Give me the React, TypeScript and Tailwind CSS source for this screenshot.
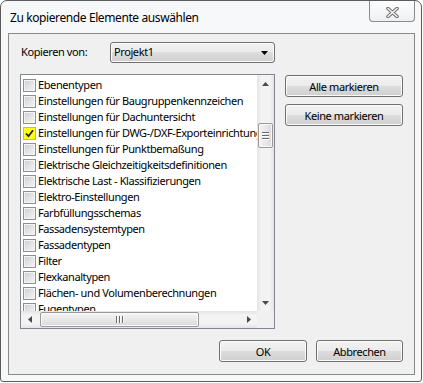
import React from 'react';

const ITEMS = [
  'Ebenentypen',
  'Einstellungen für Baugruppenkennzeichen',
  'Einstellungen für Dachuntersicht',
  'Einstellungen für DWG-/DXF-Exporteinrichtungen',
  'Einstellungen für Punktbemaßung',
  'Elektrische Gleichzeitigkeitsdefinitionen',
  'Elektrische Last - Klassifizierungen',
  'Elektro-Einstellungen',
  'Farbfüllungsschemas',
  'Fassadensystemtypen',
  'Fassadentypen',
  'Filter',
  'Flexkanaltypen',
  'Flächen- und Volumenberechnungen',
  'Fugentypen',
];

const CHECKED = 3;

const font = "font-['Noto_Sans',sans-serif]";

const WinButton: React.FC<{ label: string; className?: string }> = ({ label, className }) => (
  <button
    className={`h-[22px] rounded-[3px] border border-[#707070] bg-[linear-gradient(#f2f2f2_0%,#ebebeb_50%,#dddddd_50%,#cfcfcf_100%)] shadow-[inset_0_0_0_1px_#fbfbfb] text-[11px] leading-[15px] tracking-[-0.4px] text-black flex items-center justify-center ${className ?? ''}`}
  >
    {label}
  </button>
);

const CheckBox: React.FC<{ checked: boolean }> = ({ checked }) =>
  checked ? (
    <span className="mt-[2px] w-[13px] h-[13px] shrink-0 border border-[#c9c900] bg-[#ffff1e] flex items-center justify-center">
      <svg width="9" height="9" viewBox="0 0 9 9">
        <path d="M1 4.5 L3.5 7.2 L8 1.2" fill="none" stroke="#1e1e1e" strokeWidth="1.8" />
      </svg>
    </span>
  ) : (
    <span className="mt-[2px] w-[13px] h-[13px] shrink-0 border border-[#8e8f8f] bg-[linear-gradient(135deg,#cfcfcf,#f7f7f7)] shadow-[inset_0_0_0_1px_#f4f4f4]" />
  );

const Arrow: React.FC<{ dir: 'up' | 'down' | 'left' | 'right' }> = ({ dir }) => {
  const pts = {
    up: '0,4 3.5,0 7,4',
    down: '0,0 7,0 3.5,4',
    left: '4,0 4,7 0,3.5',
    right: '0,0 0,7 4,3.5',
  }[dir];
  const vertical = dir === 'up' || dir === 'down';
  return (
    <svg width={vertical ? 7 : 4} height={vertical ? 4 : 7} viewBox={vertical ? '0 0 7 4' : '0 0 4 7'}>
      <polygon points={pts} fill="#4a4a4a" />
    </svg>
  );
};

const GripLine: React.FC<{ vertical?: boolean }> = ({ vertical }) =>
  vertical ? (
    <span className="w-[2px] h-[7px] bg-[linear-gradient(90deg,#6a6a6a_50%,#ffffff_50%)]" />
  ) : (
    <span className="h-[2px] w-[7px] bg-[linear-gradient(#6a6a6a_50%,#ffffff_50%)]" />
  );

export default function App() {
  return (
    <div className={`w-[423px] h-[383px] bg-white ${font}`}>
      <div className="w-[422px] h-[382px] border border-[#5b5b5b] rounded-t-[7px] rounded-b-[3px] bg-[#f7f8fa] flex flex-col">
        {/* Title bar */}
        <div className="h-[32px] flex items-start justify-between">
          <span className="pl-[9px] pt-[9px] text-[12px] leading-[16px] tracking-[-0.4px] text-black">
            Zu kopierende Elemente auswählen
          </span>
          <div className="mr-[6px] w-[46px] h-[21px] border border-t-0 border-[#8a8a8a] rounded-b-[4px] bg-[linear-gradient(#fdfdfd,#eef0f3)] flex items-center justify-center">
            <svg width="13" height="11" viewBox="0 0 13 11" className="mt-[3px]">
              <path d="M2 1.5 L11 9.5 M11 1.5 L2 9.5" stroke="#6e6e6e" strokeWidth="3.6" strokeLinecap="round" />
              <path d="M2 1.5 L11 9.5 M11 1.5 L2 9.5" stroke="#f4f4f4" strokeWidth="1.6" strokeLinecap="round" />
            </svg>
          </div>
        </div>

        {/* Client area */}
        <div className="ml-[7px] w-[407px] h-[342px] border border-[#8a8a8a] bg-[#f0f0f0] pl-[11px] pr-[11px] pt-[8px] flex flex-col">
          <div className="h-[21px] flex items-center">
            <span className="w-[90px] pl-[1px] text-[11px] tracking-[-0.4px] text-black">Kopieren von:</span>
            <div className="w-[165px] h-[21px] rounded-[3px] border border-[#707070] bg-[linear-gradient(#f2f2f2_0%,#ebebeb_50%,#dddddd_50%,#cfcfcf_100%)] shadow-[inset_0_0_0_1px_#fbfbfb] flex items-center justify-between pl-[3px] pr-[6px]">
              <span className="text-[11px] tracking-[-0.4px] text-black">Projekt1</span>
              <svg width="7" height="4" viewBox="0 0 7 4">
                <polygon points="0,0 7,0 3.5,4" fill="#000" />
              </svg>
            </div>
          </div>

          <div className="mt-[11px] flex items-start">
            {/* List box */}
            <div className="w-[255px] h-[255px] border border-[#828790] bg-white grid grid-cols-[1fr_17px] grid-rows-[1fr_17px]">
              <div className="overflow-hidden pt-[2px] pl-[2px]">
                {ITEMS.map((item, i) => (
                  <div key={item} className="h-[16px] flex items-start">
                    <CheckBox checked={i === CHECKED} />
                    <span className="ml-[2px] text-[11px] leading-[15px] tracking-[-0.4px] text-black whitespace-nowrap">
                      {item}
                    </span>
                  </div>
                ))}
              </div>

              {/* Vertical scrollbar */}
              <div className="flex flex-col bg-[linear-gradient(90deg,#e4e4e4,#f3f3f3_25%,#f3f3f3_75%,#e4e4e4)]">
                <div className="h-[17px] flex items-center justify-center">
                  <Arrow dir="up" />
                </div>
                <div className="flex-1">
                  <div className="mt-[31px] mx-[1px] h-[25px] rounded-[2px] border border-[#9a9a9a] bg-[linear-gradient(90deg,#f4f4f4,#e9e9e9_50%,#d9d9d9)] shadow-[inset_0_0_0_1px_#fafafa] flex flex-col items-center justify-center gap-[1px]">
                    <GripLine />
                    <GripLine />
                    <GripLine />
                  </div>
                </div>
                <div className="h-[17px] flex items-center justify-center">
                  <Arrow dir="down" />
                </div>
              </div>

              {/* Horizontal scrollbar */}
              <div className="flex bg-[linear-gradient(#e4e4e4,#f3f3f3_25%,#f3f3f3_75%,#e4e4e4)]">
                <div className="w-[17px] flex items-center justify-center">
                  <Arrow dir="left" />
                </div>
                <div className="flex-1">
                  <div className="ml-[2px] mt-[1px] w-[159px] h-[15px] rounded-[2px] border border-[#9a9a9a] bg-[linear-gradient(#f4f4f4,#e9e9e9_50%,#d9d9d9)] shadow-[inset_0_0_0_1px_#fafafa] flex items-center justify-center gap-[1px]">
                    <GripLine vertical />
                    <GripLine vertical />
                    <GripLine vertical />
                  </div>
                </div>
                <div className="w-[17px] flex items-center justify-center">
                  <Arrow dir="right" />
                </div>
              </div>
              <div className="bg-[#f0f0f0]" />
            </div>

            {/* Side buttons */}
            <div className="ml-[10px] mt-[1px] flex flex-col gap-[7px]">
              <WinButton label="Alle markieren" className="w-[118px]" />
              <WinButton label="Keine markieren" className="w-[118px]" />
            </div>
          </div>

          <div className="mt-[11px] flex justify-end gap-[9px] pr-[0px]">
            <WinButton label="OK" className="w-[88px]" />
            <WinButton label="Abbrechen" className="w-[87px]" />
          </div>
        </div>
      </div>
    </div>
  );
}
